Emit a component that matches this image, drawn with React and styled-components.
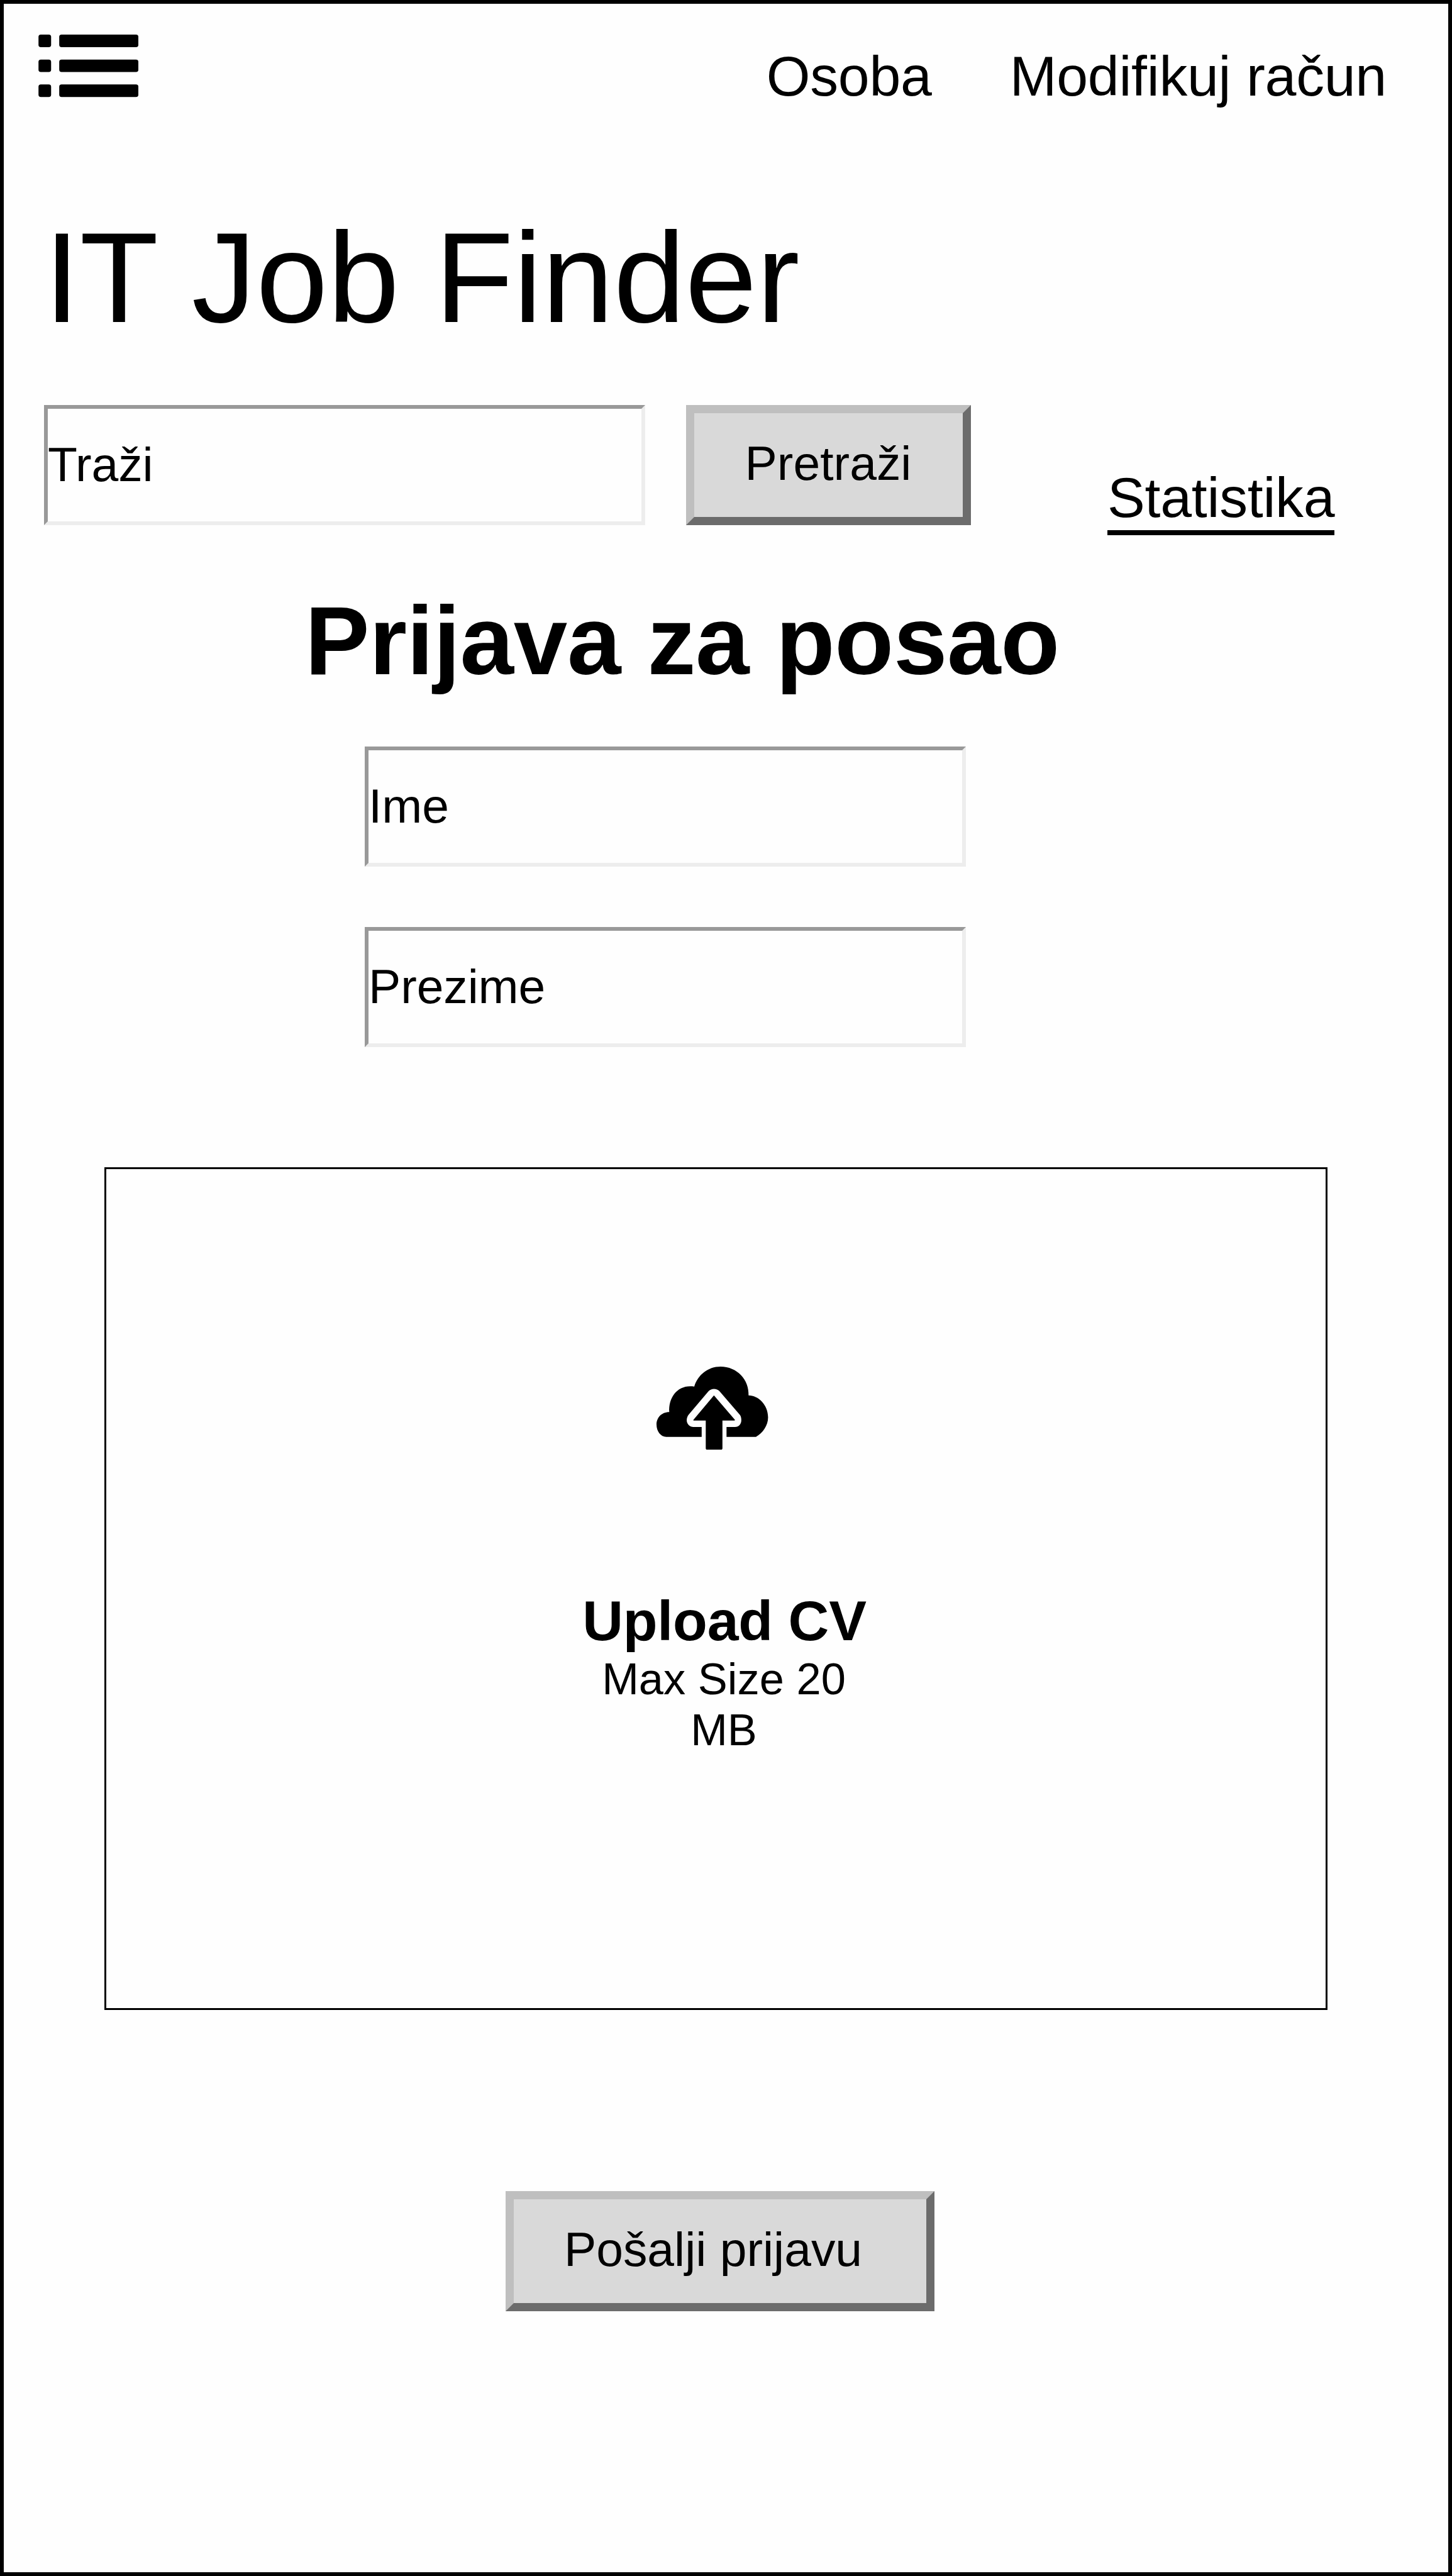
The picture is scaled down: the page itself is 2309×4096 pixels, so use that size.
import React from "react";
import styled, { createGlobalStyle } from "styled-components";

const GlobalStyle = createGlobalStyle`
  html, body { margin: 0; padding: 0; background: #fff; }
  * { box-sizing: border-box; }
`;

const Page = styled.main`
  width: 2309px;
  height: 4096px;
  border: 6px solid #000;
  background: #fefefe;
  color: #000;
  display: flex;
  flex-direction: column;
  align-items: flex-start;
  overflow: hidden;
  font-family: "Liberation Sans", Arial, sans-serif;
  font-variant-ligatures: none;
`;

const Header = styled.header`
  width: 100%;
  height: 167px;
  padding: 49px 98px 0 55px;
  display: flex;
  justify-content: space-between;
  align-items: flex-start;
`;

const MenuIcon = styled.svg`
  width: 159.2px;
  height: 99.5px;
  display: block;
`;

const Nav = styled.nav`
  display: flex;
  gap: 124px;
  padding-top: 14.3px;
`;

const NavLink = styled.a`
  font-size: 89.68px;
  line-height: 104px;
  letter-spacing: -0.25px;
  white-space: nowrap;
`;

const Title = styled.h1`
  margin: 150px 0 0 64px;
  font-size: 205px;
  font-weight: 400;
  line-height: 236px;
  letter-spacing: -0.2px;
  white-space: nowrap;
`;

const SearchRow = styled.section`
  display: flex;
  align-items: flex-start;
  height: 207.3px;
  margin: 85px 0 0 64px;
`;

const Field = styled.input`
  width: 956px;
  height: 191px;
  padding: 0 0 2px;
  border: 6px solid;
  border-color: #999 #ededed #ededed #999;
  border-radius: 0;
  background: #fefefe;
  color: #000;
  outline: none;
  font: 76.87px "Liberation Sans", Arial, sans-serif;
  letter-spacing: -0.1px;
  &::placeholder { color: #000; opacity: 1; }
`;

const Button = styled.button`
  width: ${(p) => p.$width}px;
  height: 191px;
  margin: 0 0 0 ${(p) => p.$left}px;
  padding: 0 ${(p) => p.$shift}px 7px 0;
  border: 13px solid;
  border-color: #bfbfbf #6c6c6c #6c6c6c #bfbfbf;
  border-radius: 0;
  background: #d9d9d9;
  color: #000;
  font: 76.87px "Liberation Sans", Arial, sans-serif;
  white-space: nowrap;
`;

const StatsLink = styled(NavLink)`
  align-self: flex-end;
  margin-left: 217px;
  border-bottom: 8px solid #000;
`;

const Heading = styled.h2`
  margin: 80px 0 0 479px;
  font-size: 153.73px;
  line-height: 176px;
  letter-spacing: -0.3px;
  white-space: nowrap;
`;

const Form = styled.div`
  display: flex;
  flex-direction: column;
  gap: 96px;
  margin: 79.6px 0 0 574px;
`;

const Dropzone = styled.section`
  width: 1945px;
  height: 1340px;
  margin: 191.5px 0 0 160px;
  padding: 314px 0 0 25px;
  border: 3px solid #000;
  display: flex;
  flex-direction: column;
  align-items: center;
`;

const CloudIcon = styled.svg`
  width: 177.4px;
  height: 132.1px;
  margin-right: 36px;
`;

const UploadTitle = styled.strong`
  margin-top: 221px;
  padding-left: 2px;
  font-size: 89.68px;
  line-height: 103px;
  letter-spacing: -0.2px;
`;

const UploadHint = styled.span`
  width: 400px;
  font-size: 70.46px;
  line-height: 81px;
  text-align: center;
`;

const Submit = styled.div`
  margin-top: 288px;
`;

export default function App() {
  return (
    <>
      <GlobalStyle />
      <Page>
        <Header>
          <MenuIcon viewBox="81 74 212 132.5">
            {[74, 126.8, 179.5].map((y) => (
              <g key={y}>
                <rect x="81.3" y={y} width="26.7" height="26.6" rx="5" />
                <rect x="125.2" y={y} width="167.6" height="26.6" rx="5" />
              </g>
            ))}
          </MenuIcon>
          <Nav>
            <NavLink>Osoba</NavLink>
            <NavLink>Modifikuj račun</NavLink>
          </Nav>
        </Header>
        <Title>IT Job Finder</Title>
        <SearchRow>
          <Field placeholder="Traži" />
          <Button $width={453} $left={65} $shift={1}>Pretraži</Button>
          <StatsLink>Statistika</StatsLink>
        </SearchRow>
        <Heading>Prijava za posao</Heading>
        <Form>
          <Field placeholder="Ime" />
          <Field placeholder="Prezime" />
        </Form>
        <Dropzone>
          <CloudIcon viewBox="153 137 709 528">
            <path d="M215 584C180 584 153 548 153 505C153 462 185 426 234 426C228 330 290 248 393 264C415 190 480 137 560 137C665 137 742 220 738 320C800 320 862 380 862 460C862 510 830 558 785 584H598V521H652C676 521 692 502 692 478C692 465 690 453 683 444L553 293Q540 279 518 279Q498 279 484 293L357 443C350 452 345 465 345 478C345 502 365 521 388 521H440V584Z" />
            <path d="M518 320L651 475Q652 479 648 480H572V657Q572 665 564 665H474Q466 665 466 657V480H390Q386 479 388 475Z" />
          </CloudIcon>
          <UploadTitle>Upload CV</UploadTitle>
          <UploadHint>Max Size 20 MB</UploadHint>
        </Dropzone>
        <Submit>
          <Button $width={682} $left={798} $shift={22}>Pošalji prijavu</Button>
        </Submit>
      </Page>
    </>
  );
}
